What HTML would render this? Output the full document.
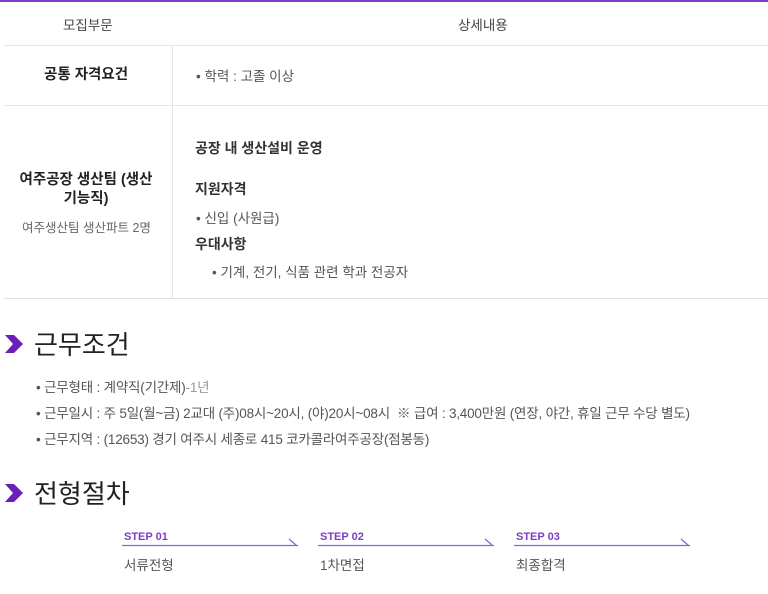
<html><head><style>
body{margin:0;width:768px;height:594px;overflow:hidden;background:#fff;font-family:"Liberation Sans","Noto Sans CJK KR",sans-serif;color:#333;position:relative}
.a{position:absolute;white-space:nowrap}
.c{text-align:center}
.hl{position:absolute;height:1px;background:#e6e6e6}
</style></head><body>
<div style="position:absolute;left:0;top:0;width:768px;height:2px;background:#7a3fc6"></div>
<div class="a" style="left:63px;top:14px;font-size:13.5px;color:#444">모집부문</div>
<div class="a" style="left:458px;top:14px;font-size:13.5px;color:#444">상세내용</div>
<div class="hl" style="left:4px;top:45px;width:764px"></div>
<div class="hl" style="left:4px;top:105px;width:764px"></div>
<div class="hl" style="left:4px;top:298px;width:764px;background:#e0e0e0"></div>
<div style="position:absolute;left:172px;top:46px;width:1px;height:252px;background:#e6e6e6"></div>
<div class="a" style="left:44px;top:63px;font-size:14.5px;font-weight:bold;color:#222">공통 자격요건</div>
<div class="a" style="left:196px;top:65px;font-size:13.5px;color:#555">• 학력 : 고졸 이상</div>
<div class="a c" style="left:4px;top:171px;width:164px;font-size:14.5px;font-weight:bold;color:#222;line-height:19px;white-space:normal">여주공장 생산팀 (생산<br>기능직)</div>
<div class="a" style="left:22px;top:217px;font-size:12.5px;color:#666">여주생산팀 생산파트 2명</div>
<div class="a" style="left:195px;top:138px;font-size:14px;font-weight:bold;color:#333">공장 내 생산설비 운영</div>
<div class="a" style="left:195px;top:179px;font-size:14px;font-weight:bold;color:#333">지원자격</div>
<div class="a" style="left:196px;top:207px;font-size:13.5px;color:#555">• 신입 (사원급)</div>
<div class="a" style="left:195px;top:234px;font-size:14px;font-weight:bold;color:#333">우대사항</div>
<div class="a" style="left:212px;top:261px;font-size:13.5px;color:#555">• 기계, 전기, 식품 관련 학과 전공자</div>

<svg class="a" style="left:5px;top:335px" width="20" height="20"><polygon points="0,0 9,0 18,9 9,18 0,18 8,9" fill="#6a1fb8"/></svg>
<div class="a" style="left:34px;top:325px;font-size:26px;color:#222">근무조건</div>
<div class="a" style="left:36px;top:376px;font-size:13.5px;color:#555;letter-spacing:-0.2px">• 근무형태 : 계약직(기간제)<span style="color:#999">-1년</span></div>
<div class="a" style="left:36px;top:402px;font-size:13.5px;color:#555;letter-spacing:-0.2px">• 근무일시 : 주 5일(월~금) 2교대 (주)08시~20시, (야)20시~08시 &nbsp;※ 급여 : 3,400만원 (연장, 야간, 휴일 근무 수당 별도)</div>
<div class="a" style="left:36px;top:428px;font-size:13.5px;color:#555;letter-spacing:-0.2px">• 근무지역 : (12653) 경기 여주시 세종로 415 코카콜라여주공장(점봉동)</div>

<svg class="a" style="left:5px;top:484px" width="20" height="20"><polygon points="0,0 9,0 18,9 9,18 0,18 8,9" fill="#6a1fb8"/></svg>
<div class="a" style="left:34px;top:474px;font-size:26px;color:#222">전형절차</div>

<div class="a" style="left:124px;top:531px;font-size:11px;font-weight:bold;color:#7a3fc6">STEP 01</div>
<div class="a" style="left:320px;top:531px;font-size:11px;font-weight:bold;color:#7a3fc6">STEP 02</div>
<div class="a" style="left:516px;top:531px;font-size:11px;font-weight:bold;color:#7a3fc6">STEP 03</div>
<svg class="a" style="left:120px;top:535px" width="580" height="12" fill="none" stroke="#9a5fd6" stroke-width="1.3">
<path d="M2 10.5H178M169 4L176 10"/><path d="M198 10.5H374M365 4L372 10"/><path d="M394 10.5H570M561 4L568 10"/></svg>
<div class="a" style="left:124px;top:554px;font-size:13.5px;color:#555">서류전형</div>
<div class="a" style="left:320px;top:554px;font-size:13.5px;color:#555">1차면접</div>
<div class="a" style="left:516px;top:554px;font-size:13.5px;color:#555">최종합격</div>
</body></html>
